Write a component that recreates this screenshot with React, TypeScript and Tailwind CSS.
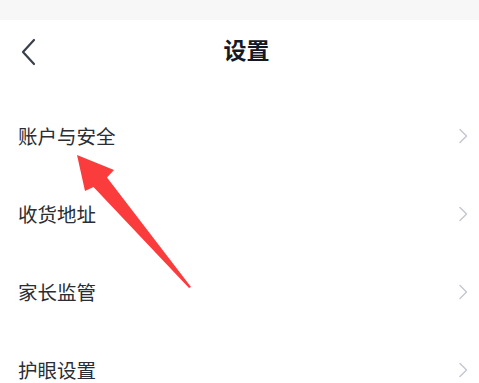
import React from 'react';

const items = ['账户与安全', '收货地址', '家长监管', '护眼设置'];

const Chevron = () => (
  <svg width="10" height="16" viewBox="0 0 10 16" fill="none">
    <path d="M2 1.5 L8.5 8 L2 14.5" stroke="#c3c6cd" strokeWidth="1.4" strokeLinecap="round" strokeLinejoin="round" />
  </svg>
);

const App = () => {
  return (
    <div
      className="relative w-[479px] h-[383px] overflow-hidden bg-white"
      style={{ fontFamily: '"Noto Sans CJK SC", "Noto Sans", sans-serif' }}
    >
      {/* 状态栏 */}
      <div className="h-[20px] bg-[#f7f7f7]" />

      {/* 标题栏 */}
      <div className="relative flex h-[64px] items-center justify-center pl-[14px] pb-[5px]">
        <button className="absolute left-[14px] top-[15px] flex h-[34px] w-[30px] items-center justify-center">
          <svg width="16" height="28" viewBox="0 0 16 28" fill="none">
            <path d="M13 2 L2 14 L13 26" stroke="#3a3f4b" strokeWidth="2.2" strokeLinecap="round" strokeLinejoin="round" />
          </svg>
        </button>
        <h1 className="text-[23px] font-bold leading-none text-[#161826]">设置</h1>
      </div>

      {/* 设置列表 */}
      <ul className="mt-[13px]">
        {items.map((label) => (
          <li key={label} className="flex h-[78px] items-center justify-between pl-[18px] pr-[11px]">
            <span className="text-[19.5px] leading-none text-[#2a2d34]">{label}</span>
            <Chevron />
          </li>
        ))}
      </ul>

      {/* 红色箭头标注 */}
      <svg className="pointer-events-none absolute left-0 top-0" width="479" height="383" viewBox="0 0 479 383">
        <polygon
          points="77,155 114,170 107,177.5 191,287 189,288 93.5,187 85,191"
          fill="#fb3c3c"
        />
      </svg>
    </div>
  );
};

export default App;
